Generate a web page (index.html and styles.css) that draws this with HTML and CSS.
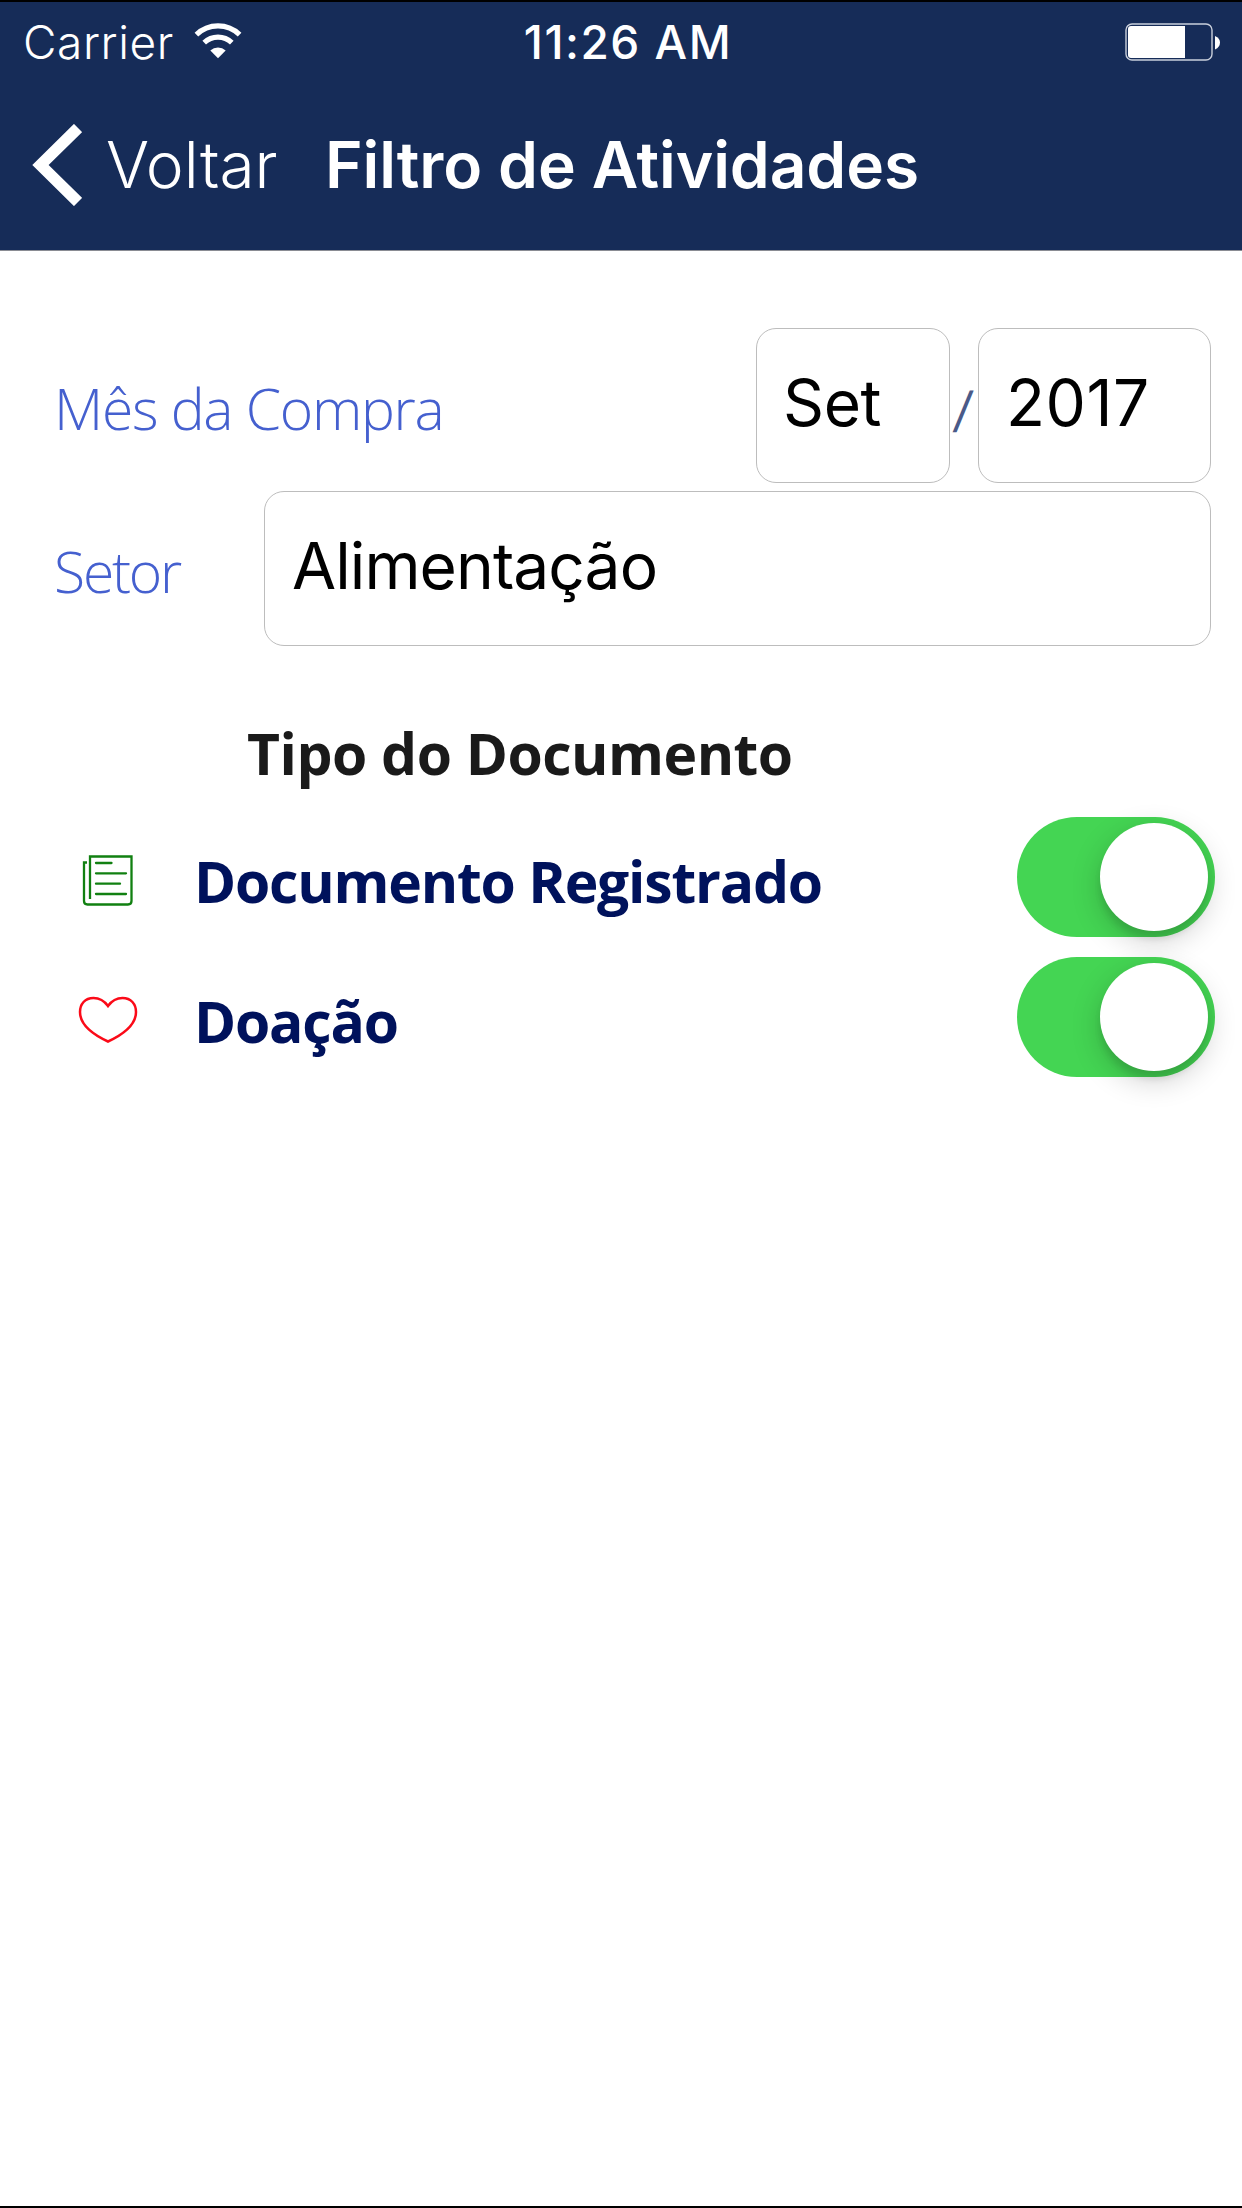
FILE: index.html
```html
<!DOCTYPE html>
<html lang="pt-BR">
<head>
  <meta charset="UTF-8" />
  <meta name="viewport" content="width=device-width, initial-scale=1.0" />
  <title>Filtro de Atividades</title>
  <link rel="stylesheet" href="styles.css">
</head>
<body>
  <header>
    <div class="status-bar">
      <div class="carrier">
        <span class="carrier-name">Carrier</span>
        <svg class="wifi" viewBox="0 0 48 36" width="48" height="36">
          <g fill="none" stroke="#fff" stroke-width="5.2">
            <path d="M2.4 11.6 A31 31 0 0 1 45.6 11.6" />
            <path d="M10.2 19.6 A20 20 0 0 1 37.8 19.6" />
          </g>
          <path d="M16.3 27.4 A11.5 11.5 0 0 1 31.7 27.4 L24 35.2 Z" fill="#fff" />
        </svg>
      </div>
      <span class="clock">11:26 AM</span>
      <svg class="battery" viewBox="0 0 96 38" width="96" height="38">
        <rect x="1" y="1" width="86" height="36" rx="6" fill="none" stroke="#c9cfdb" stroke-width="1.4" />
        <path d="M6 3 H60 V35 H6 Q3 35 3 32 V6 Q3 3 6 3 Z" fill="#fff" />
        <path d="M90 13 Q95 15 95 19.5 Q95 24 90 26.500 Z" fill="#fff" />
      </svg>
    </div>
    <nav class="nav-bar">
      <a class="back">
        <svg class="chevron" viewBox="0 0 50 82" width="50" height="82">
          <path d="M46 4 L8.500 41 L46 78" fill="none" stroke="#fff" stroke-width="11.500" />
        </svg>
        <span class="back-text">Voltar</span>
      </a>
      <h1>Filtro de Atividades</h1>
    </nav>
  </header>

  <main>
    <form class="filters">
      <div class="form-row">
        <label class="label-month">Mês da Compra</label>
        <div class="field field-month">Set</div>
        <span class="slash">/</span>
        <div class="field field-year">2017</div>
      </div>
      <div class="form-row">
        <label class="label-sector">Setor</label>
        <div class="field field-sector">Alimentação</div>
      </div>
    </form>

    <h2>Tipo do Documento</h2>

    <div class="options">
      <div class="option">
        <svg class="icon" viewBox="0 0 60 52" width="60" height="52">
          <g fill="none" stroke="#118011" stroke-width="2.300">
            <path d="M12 44 V1.500 H53.500 V46 Q53.500 49.500 50 49.500 H9.500 Q6 49.500 6 46 V7.500 H9" />
            <path d="M18 8 H33.500 M18 18.300 H48 M18 28.700 H42 M18 39 H48" stroke-linecap="round" />
          </g>
        </svg>
        <span class="option-text">Documento Registrado</span>
        <div class="switch"><div class="knob"></div></div>
      </div>
      <div class="option">
        <svg class="icon" viewBox="0 0 60 52" width="60" height="52">
          <path d="M30 11 C26 5.500 21 3 15.500 3 C7 3 2 9 2 17 C2 30 16 40 30 46.500 C44 40 58 30 58 17 C58 9 53 3 44.500 3 C39 3 34 5.500 30 11 Z" fill="none" stroke="#fb0a18" stroke-width="2.500" />
        </svg>
        <span class="option-text">Doação</span>
        <div class="switch"><div class="knob"></div></div>
      </div>
    </div>
  </main>
</body>
</html>
```
FILE: styles.css
```css
* {
  box-sizing: border-box;
}
body {
  margin: 0;
  min-height: 2208px;
  background: #fff;
  border-top: 2px solid #000;
  border-bottom: 2px solid #000;
  font-family: Inter, sans-serif;
  white-space: nowrap;
}
header {
  height: 249px;
  background: #162c58;
  border-bottom: 1px solid #8a8c93;
  color: #fff;
}
.status-bar {
  display: grid;
  grid-template-columns: 1fr auto 1fr;
  align-items: center;
  height: 80px;
  padding: 0 21px 0 23px;
  font-size: 46px;
}
.carrier {
  display: flex;
  align-items: center;
  gap: 20px;
}
.carrier-name {
  font-weight: 300;
  letter-spacing: 0.6px;
}
.wifi {
  margin-bottom: 2px;
}
.clock {
  padding-left: 12px;
  font-weight: 500;
  letter-spacing: 1.5px;
}
.battery {
  justify-self: end;
}
.nav-bar {
  display: flex;
  align-items: center;
  height: 166px;
  padding-left: 32px;
  font-size: 64px;
}
.back {
  display: flex;
  align-items: center;
  width: 293px;
}
.back-text {
  margin: 0 0 2px 24px;
  font-weight: 300;
}
h1 {
  margin: 0 0 2px;
  font-size: 64px;
  font-weight: 600;
  letter-spacing: -0.1px;
}
.filters {
  display: flex;
  flex-direction: column;
  gap: 8px;
  padding: 77px 31px 0 54px;
}
.form-row {
  display: flex;
  height: 155px;
}
label {
  padding-top: 41px;
  color: #4560cf;
  font-family: "Open Sans", sans-serif;
  font-size: 57px;
  font-weight: 300;
  line-height: 78px;
}
.label-month {
  width: 702px;
  letter-spacing: -1.3px;
}
.label-sector {
  width: 210px;
  letter-spacing: -2.2px;
}
.field {
  padding: 36px 0 0 27px;
  border: 1px solid #bdbdbd;
  border-radius: 20px;
  color: #000;
  font-size: 64px;
  line-height: 76px;
}
.field-month {
  width: 194px;
  padding-left: 26px;
  letter-spacing: -0.4px;
}
.field-year {
  width: 233px;
  letter-spacing: 0.5px;
}
.field-sector {
  flex: 1;
  letter-spacing: -0.9px;
}
.slash {
  width: 28px;
  padding-top: 43px;
  color: #4a5a88;
  font-size: 48px;
  line-height: 78px;
  text-align: center;
  transform: skewX(-8deg);
}
h2 {
  margin: 68px 0 0 247px;
  color: #1a1a1a;
  font-family: "Open Sans", sans-serif;
  font-size: 57px;
  font-weight: 700;
  letter-spacing: -0.5px;
  line-height: 78px;
}
.options {
  display: flex;
  flex-direction: column;
  gap: 20px;
  padding: 25px 27px 0 78px;
}
.option {
  display: flex;
  align-items: center;
  height: 120px;
}
.icon {
  margin-top: 7px;
}
.option-text {
  flex: 1;
  margin: 8px 0 0 56px;
  color: #00125c;
  font-family: "Open Sans", sans-serif;
  font-size: 57px;
  font-weight: 700;
  letter-spacing: -1.2px;
}
.switch {
  display: flex;
  justify-content: flex-end;
  width: 198px;
  height: 120px;
  padding: 6px 7px;
  border-radius: 60px;
  background: #44d553;
}
.knob {
  width: 108px;
  height: 108px;
  border-radius: 50%;
  background: #fff;
  box-shadow: 0 9px 30px rgba(0, 0, 0, 0.2), 0 8px 6px rgba(0, 0, 0, 0.09);
}
```
